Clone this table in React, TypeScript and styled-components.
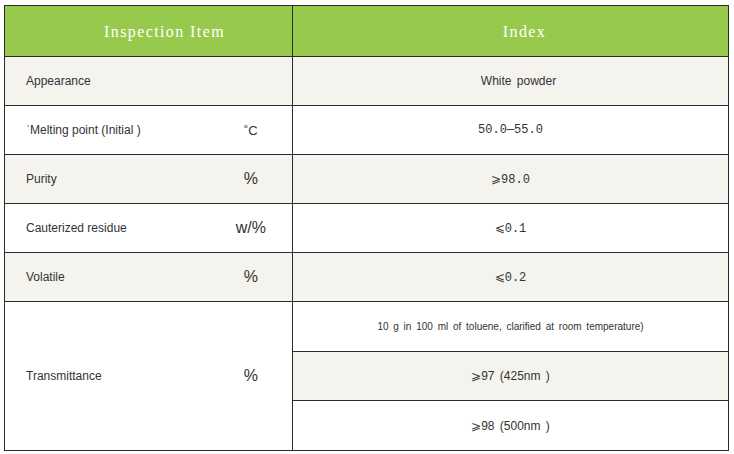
import React from "react";
import styled, { createGlobalStyle } from "styled-components";

const Global = createGlobalStyle`
  html, body { margin: 0; padding: 0; background: #ffffff; }
  body { font-family: "Liberation Sans", Arial, sans-serif; }
`;

const Page = styled.div`
  padding: 5px 0 0 4px;
`;

const Table = styled.table`
  border-collapse: collapse;
  width: 725px;
  table-layout: fixed;
  border: 1px solid #2b2b2b;
`;

const HeadCell = styled.th<{ $shift: number }>`
  background: #97c94d;
  color: #ffffff;
  font-family: "Liberation Serif", "Times New Roman", serif;
  font-weight: normal;
  font-size: 16px;
  letter-spacing: 1.4px;
  height: 49px;
  padding: 1px 0 0 ${(p) => p.$shift}px;
  text-align: center;
  border: 1px solid #2b2b2b;
`;

const Row = styled.tr<{ $shade?: boolean }>`
  background: ${(p) => (p.$shade ? "#f4f3ee" : "#ffffff")};
  height: 49px;
`;

const NameCell = styled.td`
  font-size: 12px;
  color: #333333;
  padding: 0 0 0 21px;
  border-top: 1px solid #2b2b2b;
  border-bottom: 1px solid #2b2b2b;
`;

const UnitCell = styled.td<{ $big?: boolean }>`
  font-size: ${(p) => (p.$big ? "16px" : "13px")};
  color: #333333;
  text-align: center;
  padding: 0;
  border-top: 1px solid #2b2b2b;
  border-bottom: 1px solid #2b2b2b;
  border-right: 1px solid #2b2b2b;
`;

const ValueCell = styled.td<{ $mono?: boolean; $small?: boolean; $shift?: number; $shade?: boolean }>`
  font-family: ${(p) =>
    p.$mono ? '"Liberation Mono", "DejaVu Sans Mono", monospace' : '"Liberation Sans", Arial, sans-serif'};
  font-size: ${(p) => (p.$small ? "10px" : "12px")};
  word-spacing: 2px;
  color: #333333;
  text-align: center;
  padding: 0 0 0 ${(p) => p.$shift ?? 0}px;
  border: 1px solid #2b2b2b;
  background: ${(p) => (p.$shade ? "#f4f3ee" : "transparent")};
`;

type Item = {
  name: string;
  unit: string;
  big?: boolean;
  value: string;
  mono?: boolean;
  shift?: number;
};

const items: Item[] = [
  { name: "Appearance", unit: "", value: "White powder", shift: 16 },
  { name: "\u02C8Melting point (Initial )", unit: "\u02DAC", value: "50.0\u201455.0", mono: true },
  { name: "Purity", unit: "%", big: true, value: "\u2A7E98.0", mono: true },
  { name: "Cauterized residue", unit: "w/%", big: true, value: "\u2A7D0.1", mono: true },
  { name: "Volatile", unit: "%", big: true, value: "\u2A7D0.2", mono: true },
];

export default function App() {
  return (
    <Page>
      <Global />
      <Table>
        <colgroup>
          <col style={{ width: 205 }} />
          <col style={{ width: 83 }} />
          <col />
        </colgroup>
        <thead>
          <tr>
            <HeadCell colSpan={2} $shift={32}>
              Inspection Item
            </HeadCell>
            <HeadCell $shift={28}>Index</HeadCell>
          </tr>
        </thead>
        <tbody>
          {items.map((it, i) => (
            <Row key={it.name} $shade={i % 2 === 0}>
              <NameCell>{it.name}</NameCell>
              <UnitCell $big={it.big}>{it.unit}</UnitCell>
              <ValueCell $mono={it.mono} $shift={it.shift}>
                {it.value}
              </ValueCell>
            </Row>
          ))}
          <Row style={{ height: 50 }}>
            <NameCell rowSpan={3}>Transmittance</NameCell>
            <UnitCell rowSpan={3} $big>
              %
            </UnitCell>
            <ValueCell $small>10 g in 100 ml of toluene, clarified at room temperature)</ValueCell>
          </Row>
          <Row>
            <ValueCell $shade>{"\u2A7E97 (425nm )"}</ValueCell>
          </Row>
          <Row style={{ height: 50 }}>
            <ValueCell>{"\u2A7E98 (500nm )"}</ValueCell>
          </Row>
        </tbody>
      </Table>
    </Page>
  );
}
